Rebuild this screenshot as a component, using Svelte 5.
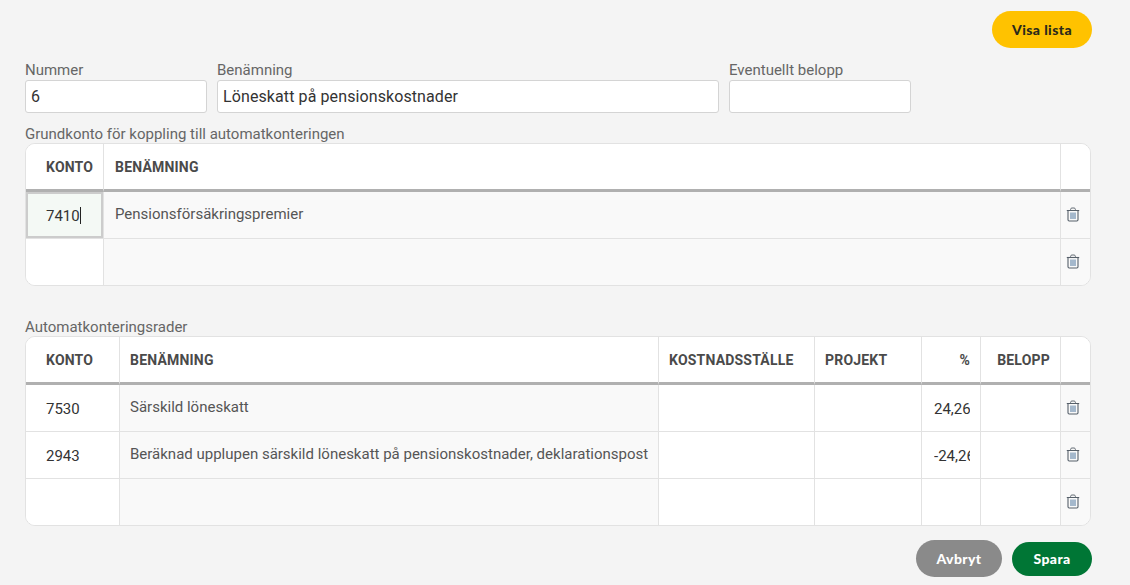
<script lang="ts">
  const grundRows = [
    { konto: '7410', name: 'Pensionsförsäkringspremier', active: true },
    { konto: '', name: '', active: false },
  ];

  const autoRows = [
    { konto: '7530', name: 'Särskild löneskatt', pct: '24,26' },
    { konto: '2943', name: 'Beräknad upplupen särskild löneskatt på pensionskostnader, deklarationspost', pct: '-24,26' },
    { konto: '', name: '', pct: '' },
  ];
</script>

{#snippet trash()}
  <button class="trash" aria-label="Ta bort">
    <svg width="14" height="15" viewBox="0 0 14 15" fill="none">
      <path d="M.8 3.5h12.4" stroke="#56606a" stroke-width="1.1" />
      <path d="M4.6 3.2V2.3c0-.8.6-1.3 1.3-1.3h2.2c.7 0 1.3.5 1.3 1.3v.9" stroke="#666e77" stroke-width="1" />
      <path d="M2 3.8v9c0 .7.5 1.2 1.2 1.2h7.6c.7 0 1.2-.5 1.2-1.2v-9" stroke="#56606a" stroke-width="1.1" />
      <path d="M5 5.6v6.4M7 5.6v6.4M9 5.6v6.4" stroke="#5f83a8" stroke-width="1.1" />
    </svg>
  </button>
{/snippet}

<div class="page">
  <div class="top-bar">
    <button class="btn btn-yellow">Visa lista</button>
  </div>

  <div class="fields">
    <label class="field small">
      <span>Nummer</span>
      <input type="text" value="6" />
    </label>
    <label class="field wide">
      <span>Benämning</span>
      <input type="text" value="Löneskatt på pensionskostnader" />
    </label>
    <label class="field small">
      <span>Eventuellt belopp</span>
      <input type="text" value="" />
    </label>
  </div>

  <div class="section-title first">Grundkonto för koppling till automatkonteringen</div>
  <div class="table-wrap grund">
    <table>
      <colgroup>
        <col class="c-konto-a" />
        <col />
        <col class="c-action" />
      </colgroup>
      <thead>
        <tr>
          <th class="konto-head">KONTO</th>
          <th>BENÄMNING</th>
          <th></th>
        </tr>
      </thead>
      <tbody>
        {#each grundRows as row}
          <tr>
            <td class="cell-konto" class:active={row.active}>
              {row.konto}{#if row.active}<span class="caret"></span>{/if}
            </td>
            <td class="cell-name">{row.name}</td>
            <td class="cell-action">{@render trash()}</td>
          </tr>
        {/each}
      </tbody>
    </table>
  </div>

  <div class="section-title second">Automatkonteringsrader</div>
  <div class="table-wrap">
    <table>
      <colgroup>
        <col class="c-konto-b" />
        <col />
        <col class="c-kst" />
        <col class="c-proj" />
        <col class="c-pct" />
        <col class="c-belopp" />
        <col class="c-action" />
      </colgroup>
      <thead>
        <tr>
          <th class="konto-head">KONTO</th>
          <th>BENÄMNING</th>
          <th>KOSTNADSSTÄLLE</th>
          <th>PROJEKT</th>
          <th class="right">%</th>
          <th class="right">BELOPP</th>
          <th></th>
        </tr>
      </thead>
      <tbody>
        {#each autoRows as row}
          <tr>
            <td class="cell-konto">{row.konto}</td>
            <td class="cell-name">{row.name}</td>
            <td class="cell-white"></td>
            <td class="cell-white"></td>
            <td class="cell-white cell-pct"><input type="text" value={row.pct} /></td>
            <td class="cell-white"></td>
            <td class="cell-action">{@render trash()}</td>
          </tr>
        {/each}
      </tbody>
    </table>
  </div>

  <div class="bottom-bar">
    <button class="btn btn-gray">Avbryt</button>
    <button class="btn btn-green">Spara</button>
  </div>
</div>

<style>
  :global(body) {
    background: #f4f4f4;
    font-family: Roboto, 'Liberation Sans', sans-serif;
  }

  .page {
    height: 585px;
    box-sizing: border-box;
    padding: 11px 38px 0 25px;
    overflow: hidden;
  }

  .top-bar {
    display: flex;
    justify-content: flex-end;
    height: 37px;
  }

  .btn {
    border: none;
    border-radius: 19px;
    height: 37px;
    padding: 0;
    font-family: Lato, Roboto, sans-serif;
    font-size: 14px;
    font-weight: 900;
    letter-spacing: 0.4px;
    cursor: pointer;
  }

  .btn-yellow {
    width: 100px;
    background: #ffc200;
    color: #2b2a1c;
  }

  .btn-gray {
    width: 86px;
    background: #8a8a8a;
    color: #fff;
  }

  .btn-green {
    width: 80px;
    height: 34px;
    background: #007635;
    color: #fff;
  }

  .fields {
    display: flex;
    gap: 10px;
    margin-top: 14px;
  }

  .field {
    display: flex;
    flex-direction: column;
    color: #666;
    font-size: 15px;
    line-height: 17px;
  }

  .field.small {
    width: 182px;
  }

  .field.wide {
    width: 502px;
  }

  .field input {
    box-sizing: border-box;
    width: 100%;
    height: 33px;
    margin-top: 1px;
    padding: 0 5px;
    border: 1px solid #d4d4d4;
    border-radius: 3px;
    background: #fff;
    color: #333;
    font-family: inherit;
    font-size: 16px;
    letter-spacing: 0.1px;
    outline: none;
  }

  .section-title {
    color: #666;
    font-size: 15px;
    line-height: 17px;
  }

  .section-title.first {
    margin-top: 13px;
  }

  .section-title.second {
    margin-top: 33px;
  }

  .table-wrap {
    box-sizing: border-box;
    width: 1066px;
    border: 1px solid #e2e2e2;
    border-radius: 10px;
    overflow: hidden;
    background: #fff;
  }

  table {
    width: 100%;
    table-layout: fixed;
    border-collapse: separate;
    border-spacing: 0;
  }

  .c-konto-a {
    width: 78px;
  }

  .c-konto-b {
    width: 94px;
  }

  .c-kst {
    width: 156px;
  }

  .c-proj {
    width: 107px;
  }

  .c-pct {
    width: 59px;
  }

  .c-belopp {
    width: 80px;
  }

  .c-action {
    width: 29px;
  }

  th {
    box-sizing: border-box;
    height: 48px;
    padding: 0 10px;
    border-right: 1px solid #e2e2e2;
    border-bottom: 3px solid #b0b0b0;
    background: #fff;
    color: #4a4a4a;
    font-size: 14px;
    font-weight: 700;
    letter-spacing: 0.2px;
    text-align: left;
    white-space: nowrap;
  }

  th.konto-head {
    padding-left: 20px;
  }

  th.right {
    text-align: right;
  }

  th:last-child,
  td:last-child {
    border-right: none;
  }

  td {
    box-sizing: border-box;
    height: 47px;
    padding: 0 10px;
    border-right: 1px solid #e2e2e2;
    border-bottom: 1px solid #e2e2e2;
    font-size: 15px;
  }

  tr:last-child td {
    border-bottom: none;
    height: 46px;
  }

  .grund th:nth-child(2),
  .grund .cell-name {
    padding-left: 11px;
  }

  .cell-konto {
    padding-left: 20px;
    padding-top: 2px;
    background: #fff;
    color: #333;
  }

  .cell-konto.active {
    background: #f4f9f5;
    box-shadow: inset 0 0 0 2px #ccc;
  }

  .caret {
    display: inline-block;
    width: 1px;
    height: 17px;
    background: #222;
    vertical-align: -3px;
  }

  .cell-name {
    padding-bottom: 2px;
    background: #f9f9f9;
    color: #555;
    white-space: nowrap;
    overflow: hidden;
  }

  .cell-white {
    background: #fff;
  }

  .cell-pct {
    padding: 0;
  }

  .cell-pct input {
    box-sizing: border-box;
    display: block;
    width: 100%;
    height: 46px;
    padding: 2px 10px 0 12px;
    border: none;
    background: transparent;
    color: #333;
    font-family: inherit;
    font-size: 15px;
    outline: none;
  }

  .cell-action {
    padding: 2px 0 0 5px;
    background: #f9f9f9;
    text-align: left;
  }

  .trash {
    display: inline-flex;
    padding: 0;
    border: none;
    background: none;
    cursor: pointer;
  }

  .bottom-bar {
    display: flex;
    justify-content: flex-end;
    align-items: center;
    gap: 10px;
    margin-top: 14px;
  }
</style>
